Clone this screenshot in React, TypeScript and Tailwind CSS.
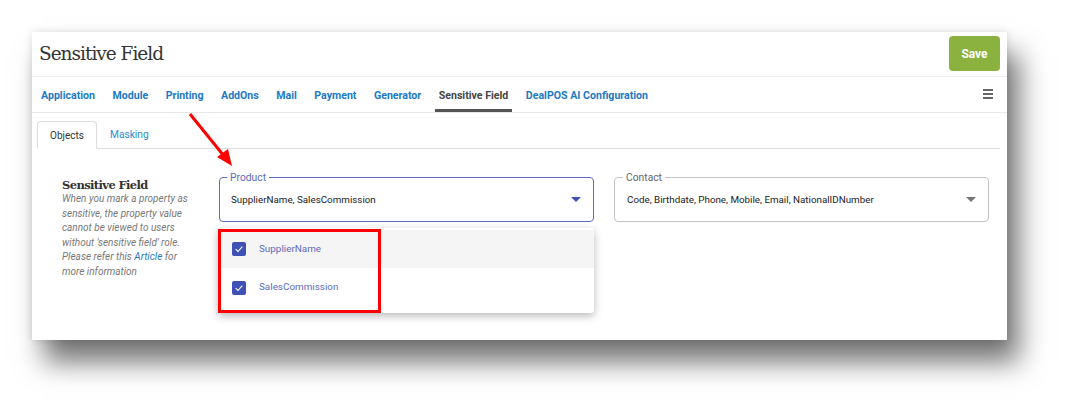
import React from "react";

const tabs = [
  "Application",
  "Module",
  "Printing",
  "AddOns",
  "Mail",
  "Payment",
  "Generator",
  "Sensitive Field",
  "DealPOS AI Configuration",
];

function DropArrow({ color }: { color: string }) {
  return (
    <svg width="10" height="5" viewBox="0 0 10 5" className="shrink-0">
      <path d="M0 0 L10 0 L5 5 Z" fill={color} />
    </svg>
  );
}

function Check() {
  return (
    <div className="w-[14px] h-[14px] rounded-[2px] bg-[#3f51b5] flex items-center justify-center">
      <svg width="10" height="10" viewBox="0 0 24 24">
        <path d="M4 12.5 L9.5 18 L20 6.5" fill="none" stroke="white" strokeWidth="2.6" />
      </svg>
    </div>
  );
}

export default function App() {
  return (
    <div
      className="relative w-[1072px] h-[405px] bg-white overflow-hidden"
      style={{ fontFamily: "Roboto, 'Liberation Sans', sans-serif" }}
    >
      <div className="pt-[32px] pl-[32px]">
        <div className="w-[975px] h-[308px] bg-white shadow-[0_0_8px_rgba(0,0,0,0.12),12px_22px_26px_rgba(0,0,0,0.55)] flex flex-col">
          {/* Header */}
          <div className="h-[45px] flex items-start justify-between border-b border-[#eeeeee] pl-[7px] pr-[7px]">
            <div
              className="mt-[10px] text-[18.5px] leading-[24px] text-[#333] tracking-[-1px]"
              style={{ fontFamily: "'DejaVu Serif', serif" }}
            >
              Sensitive Field
            </div>
            <button className="mt-[4px] w-[51px] h-[35px] rounded-[4px] bg-[#8bb23f] text-white text-[12px] font-bold">
              Save
            </button>
          </div>
          {/* Tabs */}
          <div className="h-[36px] flex items-stretch border-b border-[#e8e8e8] pl-[5px] pr-[14px]">
            <div className="flex items-stretch gap-[9.5px]">
              {tabs.map((t) => {
                const active = t === "Sensitive Field";
                return (
                  <div
                    key={t}
                    className={
                      active
                        ? "px-[4px] flex items-center text-[10.6px] font-bold text-[#444] border-b-[3px] border-[#555] pt-[6px]"
                        : "px-[4px] flex items-center text-[10.6px] font-bold text-[#1c79c4] border-b-[3px] border-transparent pt-[6px]"
                    }
                  >
                    {t}
                  </div>
                );
              })}
            </div>
            <div className="ml-auto flex flex-col justify-center gap-[2px] pb-[1px]">
              <div className="w-[10px] h-[2px] bg-[#666]" />
              <div className="w-[10px] h-[2px] bg-[#666]" />
              <div className="w-[10px] h-[2px] bg-[#666]" />
            </div>
          </div>
          {/* Sub tabs */}
          <div className="pl-[5px] pr-[7px] pt-[9px]">
            <div className="flex items-end border-b border-[#dddddd] h-[27px]">
              <div className="w-[60px] h-[28px] -mb-px border border-[#dddddd] border-b-white rounded-t-[4px] bg-white flex items-center justify-center text-[10px] text-[#333]">
                Objects
              </div>
              <div className="h-[27px] flex items-center pl-[13px] text-[10.2px] text-[#2a8ad0]">
                Masking
              </div>
            </div>
          </div>
          {/* Content */}
          <div className="flex pl-[30px] pt-[28px]">
            <div className="w-[157px] pt-[1px]">
              <div
                className="text-[11.5px] leading-[14px] font-bold text-[#333] tracking-[-0.6px]"
                style={{ fontFamily: "'DejaVu Serif', serif" }}
              >
                Sensitive Field
              </div>
              <div className="mt-0 text-[10px] leading-[14.6px] italic text-[#777]">
                When you mark a property as
                <br />
                sensitive, the property value
                <br />
                cannot be viewed to users
                <br />
                without 'sensitive field' role.
                <br />
                Please refer this <span className="text-[#1c79c4]">Article</span> for
                <br />
                more information
              </div>
            </div>
            <div className="flex gap-[20px]">
              <div className="relative">
                <div className="w-[375px] h-[45px] border-[1.5px] border-[#5c6bc0] rounded-[4px] flex items-center pl-[11px] pr-[12px]">
                  <span className="text-[9.8px] text-[#222] pt-[1px]">SupplierName, SalesCommission</span>
                  <div className="ml-auto">
                    <DropArrow color="#3f51b5" />
                  </div>
                </div>
                <span className="absolute left-[8px] top-[-6px] bg-white px-[3px] text-[10.3px] leading-[13px] text-[#5c6bc0]">
                  Product
                </span>
                {/* Menu */}
                <div className="absolute left-[-1px] top-[51px] w-[376px] h-[85px] bg-white rounded-[3px] shadow-[0_3px_8px_rgba(0,0,0,0.28)] pt-[2px]">
                  <div className="h-[38px] bg-[#f5f5f5] flex items-center pl-[14px] gap-[13px]">
                    <Check />
                    <span className="text-[9.9px] text-[#5c6bc0]">SupplierName</span>
                  </div>
                  <div className="h-[39px] flex items-center pl-[14px] gap-[13px]">
                    <Check />
                    <span className="text-[9.9px] text-[#5c6bc0]">SalesCommission</span>
                  </div>
                  <div className="absolute left-0 top-[1px] w-[163px] h-[84px] border-[3px] border-[#ff0000]" />
                </div>
              </div>
              <div className="relative">
                <div className="w-[375px] h-[45px] border border-[#c4c4c4] rounded-[4px] flex items-center pl-[12px] pr-[12px]">
                  <span className="text-[9.8px] text-[#222] pt-[1px]">
                    Code, Birthdate, Phone, Mobile, Email, NationalIDNumber
                  </span>
                  <div className="ml-auto">
                    <DropArrow color="#777777" />
                  </div>
                </div>
                <span className="absolute left-[9px] top-[-6px] bg-white px-[3px] text-[10.3px] leading-[13px] text-[#666]">
                  Contact
                </span>
              </div>
            </div>
          </div>
        </div>
      </div>
      {/* Red arrow annotation */}
      <svg
        className="absolute left-0 top-0 pointer-events-none"
        width="1072"
        height="405"
        viewBox="0 0 1072 405"
      >
        <line x1="190" y1="114" x2="224" y2="156" stroke="#ff0000" strokeWidth="3" />
        <path d="M232 166 L217 157 L228 149 Z" fill="#ff0000" />
      </svg>
    </div>
  );
}
